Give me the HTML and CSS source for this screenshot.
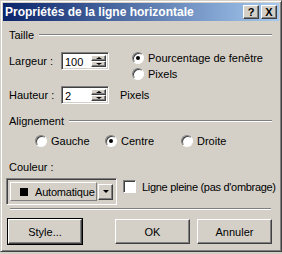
FILE: index.html
```html
<!DOCTYPE html>
<html lang="fr">
<head>
    <meta charset="UTF-8">
    <title>Propriétés de la ligne horizontale</title>
    <link rel="stylesheet" href="styles.css">
</head>
<body>
    <div class="dialog">
        <div class="titlebar">
            <span class="title">Propriétés de la ligne horizontale</span>
            <div class="caption-btns">
                <span class="cbtn">?</span>
                <span class="cbtn">X</span>
            </div>
        </div>

        <div class="content">
            <div class="group-head"><span>Taille</span><i class="rule"></i></div>

            <div class="size-block">
                <div class="size-left">
                    <div class="row">
                        <span class="lbl">Largeur :</span>
                        <div class="spin"><span class="spin-val">100</span><div class="spin-btns"><b class="up"></b><b class="down"></b></div></div>
                    </div>
                </div>
                <div class="size-right">
                    <label class="radio"><span class="dot on"></span>Pourcentage de fenêtre</label>
                    <label class="radio"><span class="dot"></span>Pixels</label>
                </div>
            </div>

            <div class="row height-row">
                <span class="lbl">Hauteur :</span>
                <div class="spin"><span class="spin-val">2</span><div class="spin-btns"><b class="up"></b><b class="down"></b></div></div>
                <span class="unit">Pixels</span>
            </div>

            <div class="group-head align-head"><span>Alignement</span><i class="rule"></i></div>

            <div class="align-row">
                <label class="radio"><span class="dot"></span>Gauche</label>
                <label class="radio"><span class="dot on"></span>Centre</label>
                <label class="radio"><span class="dot"></span>Droite</label>
            </div>

            <div class="color-lbl">Couleur :</div>
            <div class="color-row">
                <div class="combo">
                    <div class="combo-face"><span class="swatch"></span>Automatique</div>
                    <span class="combo-btn"><b></b></span>
                </div>
                <label class="check"><span class="box"></span>Ligne pleine (pas d'ombrage)</label>
            </div>

            <div class="sep"></div>

            <div class="buttons">
                <span class="btn default">Style...</span>
                <div class="btn-pair">
                    <span class="btn">OK</span>
                    <span class="btn">Annuler</span>
                </div>
            </div>
        </div>
    </div>
</body>
</html>
```

FILE: styles.css
```css
body {
    margin: 0;
    background: #d4d0c8;
    font-family: "Liberation Sans", Arial, sans-serif;
    font-size: 11px;
    color: #000;
}

.dialog {
    width: 276px;
    height: 246px;
    background: #d4d0c8;
    border: 1px solid;
    border-color: #d4d0c8 #404040 #404040 #d4d0c8;
    box-shadow: inset 1px 1px 0 #fff, inset -1px -1px 0 #808080;
    padding: 2px;
}

.titlebar {
    height: 18px;
    display: flex;
    align-items: center;
    justify-content: space-between;
    background: linear-gradient(to right, #0a246a, #a6caf0);
    padding: 0 2px;
}

.title {
    color: #fff;
    font-weight: bold;
    font-size: 12px;
}

.caption-btns {
    display: flex;
    gap: 2px;
}

.cbtn {
    width: 14px;
    height: 12px;
    background: #d4d0c8;
    border: 1px solid;
    border-color: #fff #404040 #404040 #fff;
    box-shadow: inset -1px -1px 0 #808080;
    font-weight: bold;
    font-size: 11px;
    line-height: 12px;
    text-align: center;
}

.content {
    padding: 7px 7px 0 6px;
}

.group-head {
    display: flex;
    align-items: center;
    gap: 5px;
    height: 14px;
}

.rule {
    flex: 1;
    height: 0;
    border-top: 1px solid #808080;
    border-bottom: 1px solid #fff;
}

.size-block {
    display: flex;
    margin-top: 10px;
    height: 28px;
}

.size-left {
    width: 123px;
}

.row {
    display: flex;
    align-items: center;
}

.lbl {
    width: 52px;
}

.spin {
    width: 48px;
    height: 18px;
    box-sizing: border-box;
    background: #fff;
    border: 1px solid;
    border-color: #808080 #fff #fff #808080;
    box-shadow: inset 1px 1px 0 #404040, inset -1px -1px 0 #d4d0c8;
    display: flex;
    justify-content: space-between;
    padding: 2px 2px 2px 3px;
}

.spin-val {
    line-height: 14px;
}

.spin-btns {
    display: flex;
    flex-direction: column;
    width: 15px;
}

.spin-btns b,
.combo-btn {
    flex: 1;
    position: relative;
    background: #d4d0c8;
    border: 1px solid;
    border-color: #fff #404040 #404040 #fff;
    box-shadow: inset -1px -1px 0 #808080;
}

.spin-btns b::after {
    content: "";
    position: absolute;
    left: 4px;
    top: 1px;
    border-left: 3px solid transparent;
    border-right: 3px solid transparent;
}

.spin-btns b.up::after {
    border-bottom: 2px solid #000;
}

.spin-btns b.down::after {
    border-top: 2px solid #000;
}

.size-right {
    display: flex;
    flex-direction: column;
    gap: 3px;
    margin-top: -1px;
}

.radio {
    display: flex;
    align-items: center;
    gap: 4px;
    height: 13px;
}

.dot {
    width: 10px;
    height: 10px;
    border-radius: 50%;
    background: #fff;
    border: 1px solid;
    border-color: #808080 #fff #fff #808080;
    box-shadow: inset 1px 1px 0 #404040;
    display: inline-flex;
    align-items: center;
    justify-content: center;
}

.dot.on::after {
    content: "";
    width: 4px;
    height: 4px;
    border-radius: 50%;
    background: #000;
}

.height-row {
    margin-top: 6px;
}

.unit {
    margin-left: 11px;
}

.align-head {
    margin-top: 10px;
}

.align-row {
    display: flex;
    margin-top: 6px;
    padding-left: 26px;
}

.align-row .radio:nth-child(1) { width: 70px; }
.align-row .radio:nth-child(2) { width: 76px; }

.color-lbl {
    margin-top: 14px;
    height: 14px;
}

.color-row {
    display: flex;
    align-items: flex-start;
    margin-top: 3px;
    margin-left: -3px;
    gap: 6px;
}

.combo {
    flex: none;
    width: 111px;
    height: 27px;
    box-sizing: border-box;
    border: 1px solid;
    border-color: #808080 #fff #fff #808080;
    box-shadow: inset 1px 1px 0 #404040, inset -1px -1px 0 #d4d0c8;
    display: flex;
    align-items: center;
    padding: 3px;
    gap: 1px;
}

.combo-face {
    flex: 1;
    height: 17px;
    display: flex;
    align-items: center;
    gap: 7px;
    padding-left: 9px;
    border: 1px solid;
    border-color: #fff #808080 #808080 #fff;
    letter-spacing: -0.2px;
    white-space: nowrap;
    overflow: hidden;
}

.swatch {
    flex: none;
    width: 8px;
    height: 8px;
    background: #000;
}

.combo-btn {
    flex: none;
    width: 13px;
    height: 14px;
    display: flex;
    align-items: center;
    justify-content: center;
}

.combo-btn b {
    border-left: 3px solid transparent;
    border-right: 3px solid transparent;
    border-top: 3px solid #000;
}

.check {
    display: flex;
    align-items: center;
    gap: 6px;
    margin-top: 2px;
    white-space: nowrap;
    letter-spacing: -0.3px;
}

.box {
    flex: none;
    width: 11px;
    height: 11px;
    background: #fff;
    border: 1px solid;
    border-color: #808080 #fff #fff #808080;
    box-shadow: inset 1px 1px 0 #404040;
}

.sep {
    margin: 3px 1px 0 1px;
    border-top: 1px solid #808080;
    border-bottom: 1px solid #fff;
}

.buttons {
    display: flex;
    justify-content: space-between;
    margin-top: 9px;
    margin-left: -1px;
}

.btn-pair {
    display: flex;
    gap: 7px;
}

.btn {
    width: 75px;
    height: 25px;
    box-sizing: border-box;
    border: 1px solid;
    border-color: #fff #404040 #404040 #fff;
    box-shadow: inset -1px -1px 0 #808080;
    display: flex;
    align-items: center;
    justify-content: center;
}

.btn.default {
    width: 74px;
    outline: 1px solid #000;
}
```
